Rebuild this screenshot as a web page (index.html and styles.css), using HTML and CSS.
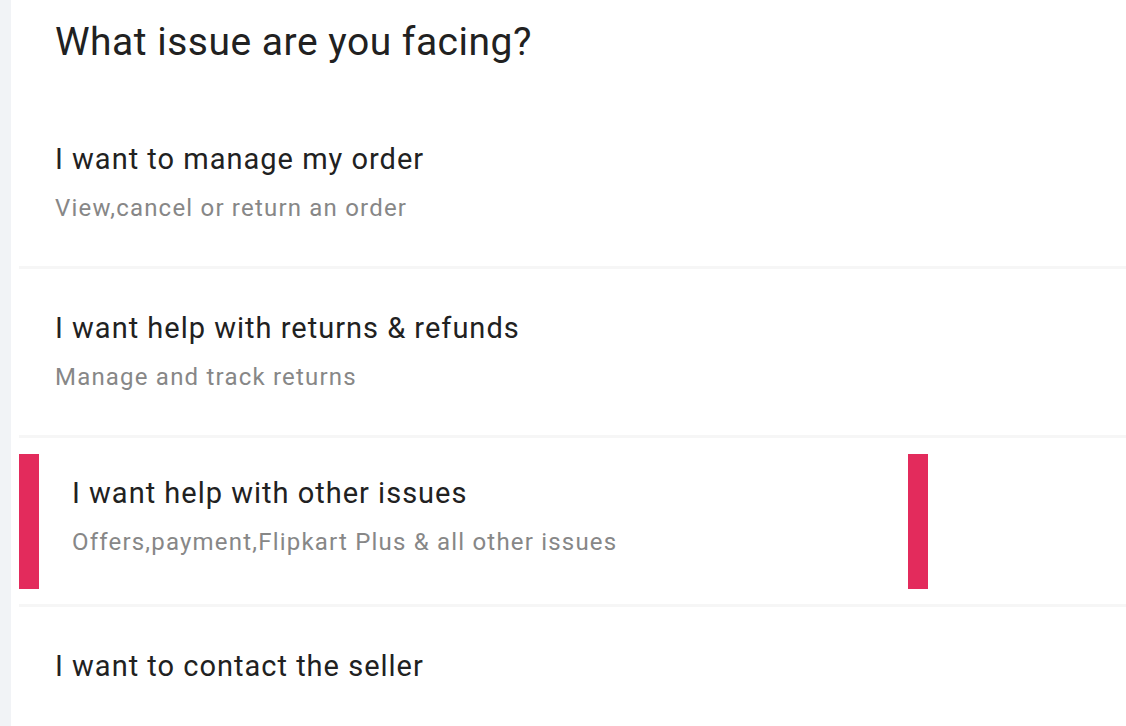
FILE: index.html
```html
<!DOCTYPE html>
<html>
<head>
<meta charset="utf-8">
<link rel="stylesheet" href="styles.css">
</head>
<body>
<div class="page">
  <h1 class="heading">What issue are you facing?</h1>
  <ul class="issues">
    <li class="issue">
      <div class="issue-title">I want to manage my order</div>
      <div class="issue-sub">View,cancel or return an order</div>
    </li>
    <li class="issue">
      <div class="issue-title">I want help with returns &amp; refunds</div>
      <div class="issue-sub">Manage and track returns</div>
    </li>
    <li class="issue issue-active">
      <div class="active-box">
        <div class="issue-title">I want help with other issues</div>
        <div class="issue-sub">Offers,payment,Flipkart Plus &amp; all other issues</div>
      </div>
    </li>
    <li class="issue issue-last">
      <div class="issue-title">I want to contact the seller</div>
    </li>
  </ul>
</div>
</body>
</html>
```

FILE: styles.css
```css
html, body {
  margin: 0;
  padding: 0;
  height: 100%;
  overflow: hidden;
}
body {
  background: #f1f3f6;
  font-family: Roboto, "Liberation Sans", Arial, sans-serif;
}
.page {
  margin-left: 11px;
  background: #ffffff;
  height: 100%;
}
.heading {
  margin: 0;
  padding: 19px 0 0 44px;
  font-size: 39px;
  line-height: 46px;
  letter-spacing: 0.5px;
  font-weight: 400;
  color: #212121;
}
.issues {
  list-style: none;
  margin: 35px 0 0 8px;
  padding: 0;
}
.issue {
  border-bottom: 3px solid #f6f6f6;
  box-sizing: border-box;
  height: 169px;
  padding: 42px 0 0 36px;
}
.issue-title {
  font-size: 29px;
  line-height: 34px;
  letter-spacing: 1px;
  color: #212121;
}
.issue-sub {
  margin-top: 18px;
  font-size: 24px;
  line-height: 28px;
  letter-spacing: 1.2px;
  color: #878787;
}
.issue-active {
  padding: 16px 0 0 0;
}
.active-box {
  box-sizing: border-box;
  width: 909px;
  height: 135px;
  border-left: 20px solid #e32b5c;
  border-right: 20px solid #e32b5c;
  padding: 22px 0 0 33px;
}
.issue-last {
  border-bottom: none;
  height: auto;
}
```
